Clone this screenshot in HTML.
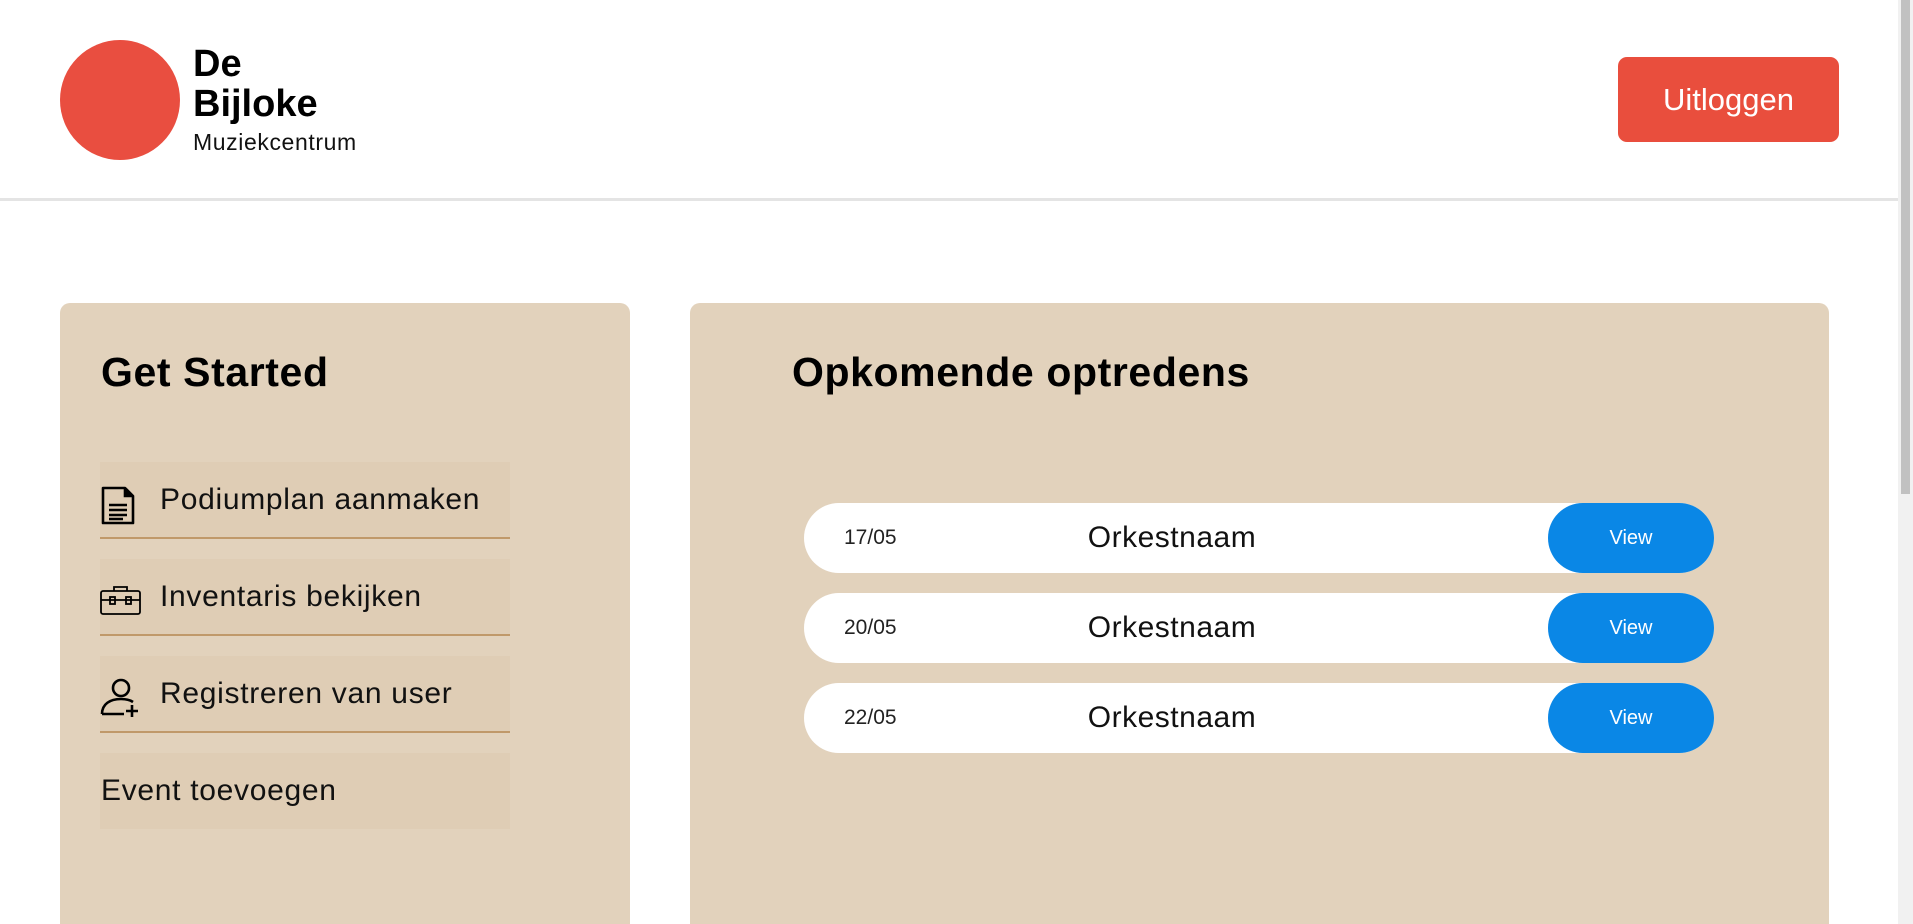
<!DOCTYPE html>
<html style="height:924px;overflow:hidden"><head><meta charset="utf-8"><style>
*{margin:0;padding:0;box-sizing:border-box}
html,body{width:1913px;height:924px;overflow:hidden}
body{background:#fff;font-family:"Liberation Sans",sans-serif;position:relative;color:#111}
.hdr{position:absolute;left:0;top:0;width:1898px;height:201px;border-bottom:3px solid #e4e4e4}
.logo{position:absolute;left:60px;top:40px;width:120px;height:120px;border-radius:50%;background:#e94e40}
.t1{position:absolute;left:193px;top:44px;font-weight:bold;font-size:38px;line-height:40px;color:#000}
.t2{position:absolute;left:193px;top:129px;font-size:23px;color:#111;letter-spacing:0.6px}
.btn{position:absolute;left:1618px;top:57px;width:221px;height:85px;background:#e94e3d;border-radius:9px;color:#fff;font-size:31px;text-align:center;line-height:85px}
.sb{position:absolute;left:1898px;top:0;width:15px;height:924px;background:#f1f1f1}
.sb div{position:absolute;left:3px;top:0;width:9px;height:494px;background:#c1c1c1}
.card{position:absolute;top:303px;height:621px;background:#e2d2bc;border-radius:10px 10px 0 0}
h2{position:absolute;font-size:41px;font-weight:bold;color:#000;letter-spacing:0.6px}
.item{position:absolute;left:100px;width:410px;height:76px;background:#dfcdb5;font-size:30px;line-height:76px;letter-spacing:0.7px}
.item span{position:absolute;left:60px}
.line{position:absolute;left:100px;width:410px;height:2px;background:#c0996a}
.item svg{position:absolute;left:0;top:22px}
.row{position:absolute;left:804px;width:910px;height:70px;background:#fff;border-radius:35px}
.row .d{position:absolute;left:40px;top:0;line-height:70px;font-size:21px;color:#222}
.row .n{position:absolute;left:0;width:736px;text-align:center;line-height:70px;font-size:30px;color:#111;letter-spacing:0.5px}
.row .v{position:absolute;right:0;top:0;width:166px;height:70px;border-radius:35px;background:#0a87e6;color:#fff;font-size:20px;text-align:center;line-height:70px}
</style></head><body>
<div class="hdr">
<div class="logo"></div>
<div class="t1">De<br>Bijloke</div>
<div class="t2">Muziekcentrum</div>
<div class="btn">Uitloggen</div>
</div>
<div class="sb"><div></div></div>

<div class="card" style="left:60px;width:570px"></div>
<h2 style="left:101px;top:349px">Get Started</h2>
<div class="item" style="top:462px"><svg width="36" height="42" viewBox="0 0 36 42" fill="none" stroke="#000" stroke-width="2.6"><path d="M3 4h22l8 8v27H3z" stroke-linejoin="round"/><path d="M25 4v8h8" fill="#000"/><path d="M9 21h18M9 26h18M9 31h18M9 35h14"/></svg><span>Podiumplan aanmaken</span></div>
<div class="line" style="top:537px"></div>
<div class="item" style="top:559px"><svg width="42" height="36" viewBox="0 0 42 36" fill="none" stroke="#000" stroke-width="1.8"><rect x="1" y="10" width="39" height="23" rx="2"/><path d="M14 10V6h13v4M1 19h39"/><rect x="10" y="16" width="5" height="7"/><rect x="26" y="16" width="5" height="7"/></svg><span>Inventaris bekijken</span></div>
<div class="line" style="top:634px"></div>
<div class="item" style="top:656px"><svg width="42" height="42" viewBox="0 0 42 42" fill="none" stroke="#000" stroke-width="2.6"><circle cx="21" cy="10" r="8"/><path d="M2 36c0-10 8-15 19-15 5 0 9 1 12 3M2 36h22M32 27v12M26 33h12"/></svg><span>Registreren van user</span></div>
<div class="line" style="top:731px"></div>
<div class="item" style="top:753px"><span style="left:1px">Event toevoegen</span></div>

<div class="card" style="left:690px;width:1139px"></div>
<h2 style="left:792px;top:349px">Opkomende optredens</h2>
<div class="row" style="top:503px"><div class="d">17/05</div><div class="n">Orkestnaam</div><div class="v">View</div></div>
<div class="row" style="top:593px"><div class="d">20/05</div><div class="n">Orkestnaam</div><div class="v">View</div></div>
<div class="row" style="top:683px"><div class="d">22/05</div><div class="n">Orkestnaam</div><div class="v">View</div></div>
</body></html>
